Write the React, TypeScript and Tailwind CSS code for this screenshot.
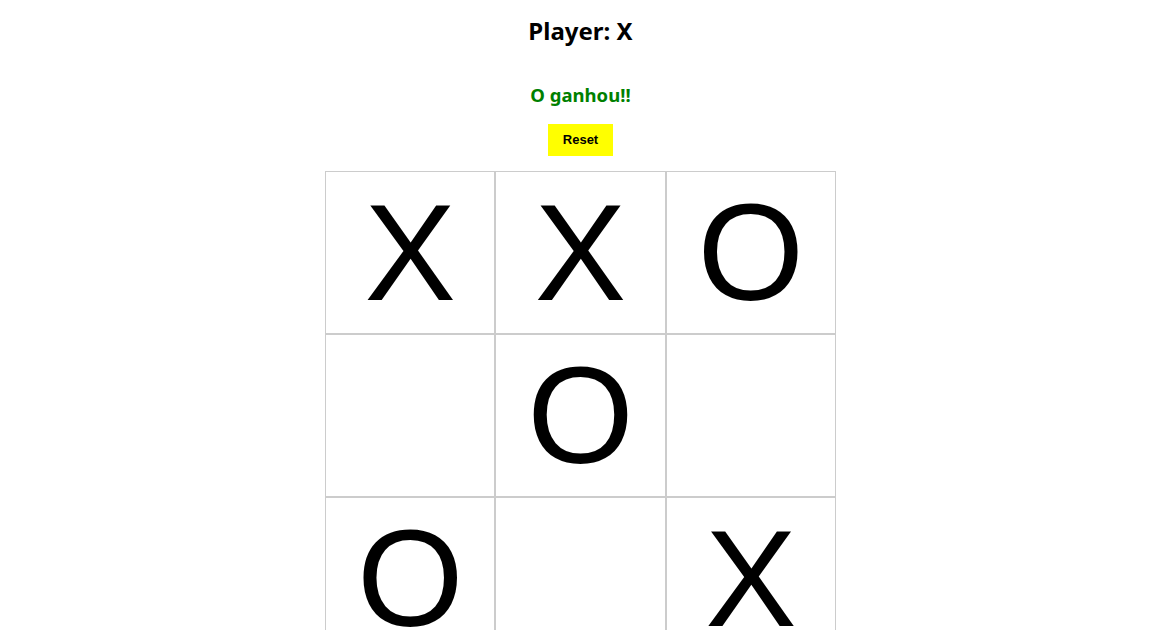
import { useState } from "react";

type Cell = "X" | "O" | "";

const initialBoard: Cell[] = ["X", "X", "O", "", "O", "", "O", "", "X"];

export default function App() {
  const [board, setBoard] = useState<Cell[]>(initialBoard);

  const handleReset = () => {
    setBoard(Array(9).fill(""));
  };

  return (
    <div
      className="flex flex-col items-center bg-white min-h-screen pt-[15px]"
      style={{ fontFamily: '"Noto Sans", "Open Sans", sans-serif' }}
    >
      <h1 className="text-[24px] leading-[32px] font-bold text-black">
        Player: X
      </h1>

      <h2 className="mt-[36px] text-[18.5px] leading-[24px] font-bold text-[#008000]">
        O ganhou!!
      </h2>

      <button
        onClick={handleReset}
        className="mt-[17px] h-[32px] px-[15px] bg-[#ffff00] text-black text-[13px] font-bold"
        style={{ fontFamily: '"Liberation Sans", Arial, sans-serif' }}
      >
        Reset
      </button>

      <div className="mt-[15px] grid grid-cols-3 w-[511px]">
        {board.map((cell, i) => (
          <div
            key={i}
            className="h-[163px] border border-[#ccc] flex items-center justify-center text-[137px] leading-none text-black"
            style={{ fontFamily: '"Liberation Sans", Arial, sans-serif' }}
          >
            {cell}
          </div>
        ))}
      </div>
    </div>
  );
}
